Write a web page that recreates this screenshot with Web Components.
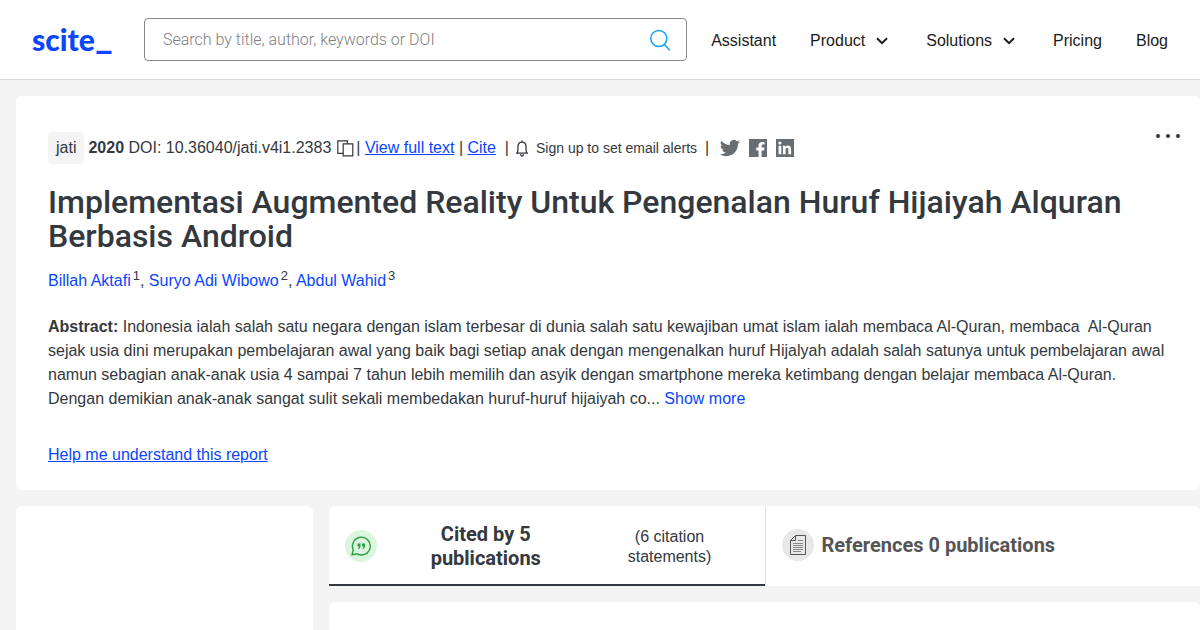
<!DOCTYPE html>
<html lang="id">
<head>
<meta charset="utf-8">
<meta name="viewport" content="width=device-width, initial-scale=1">
<title>Implementasi Augmented Reality Untuk Pengenalan Huruf Hijaiyah Alquran Berbasis Android - scite</title>
<style>
  body {
    margin: 0;
    background: #f4f4f4;
    color: #33393e;
    font: 16px/24px "Liberation Sans", Arial, sans-serif;
    overflow-x: hidden;
  }
</style>
</head>
<body>
<scite-header></scite-header>
<scite-page>
  <scite-paper slot="paper"></scite-paper>
  <scite-card slot="aside"></scite-card>
  <scite-tabs slot="results">
    <scite-tab kind="cited" active>Cited by 5 publications<span slot="note">(6 citation statements)</span></scite-tab>
    <scite-tab kind="refs">References 0 publications</scite-tab>
  </scite-tabs>
  <scite-card slot="results"></scite-card>
</scite-page>

<script>
const define = (name, html, setup) => {
  const template = document.createElement('template');
  template.innerHTML = html;
  customElements.define(name, class extends HTMLElement {
    constructor() {
      super();
      this.attachShadow({ mode: 'open' }).append(template.content.cloneNode(true));
    }
    connectedCallback() {
      if (setup) setup(this, this.shadowRoot);
    }
  });
};

define('scite-logo', `
  <style>
    :host { display: block; }
    a { color: #0a46ff; text-decoration: none; font: 900 30px/32px Lato, sans-serif; display: block; padding-bottom: 2px; }
    span { font-size: 38px; line-height: 0; vertical-align: 3px; }
  </style>
  <a href="/" aria-label="scite home">scite<span>_</span></a>`);

define('scite-search', `
  <style>
    :host { display: block; }
    form { display: flex; align-items: center; box-sizing: border-box; height: 43px; padding: 0 15px 0 18px; border: 1px solid #888; border-radius: 4px; background: #fff; }
    input { flex: 1; min-width: 0; border: 0; padding: 0; outline: 0; background: none; font: 300 16px/24px Roboto, sans-serif; color: #222; }
    input::placeholder { color: #808080; opacity: 1; }
    button { border: 0; padding: 0; background: none; display: flex; }
  </style>
  <form role="search">
    <input type="text" aria-label="Search" placeholder="Search by title, author, keywords or DOI">
    <button type="button" aria-label="Submit search">
      <svg width="21" height="22" viewBox="0 0 21 22" fill="none" stroke="#12a0f8" stroke-width="1.5"><circle cx="8.8" cy="9.5" r="8"/><path d="M14.2 15.5l5.6 5.8"/></svg>
    </button>
  </form>`);

define('scite-nav-item', `
  <style>
    :host { display: block; }
    a, button { display: flex; align-items: center; gap: 11px; border: 0; padding: 2px 0 0; background: none; font: inherit; line-height: 24px; color: #1b1b1b; text-decoration: none; white-space: nowrap; }
    button { margin-right: 4px; }
  </style>
  <a href="#"><slot></slot></a>`, (host, root) => {
  if (!host.hasAttribute('menu') || root.querySelector('button')) return;
  const button = document.createElement('button');
  button.type = 'button';
  button.setAttribute('aria-haspopup', 'true');
  button.innerHTML = '<slot></slot><svg width="12" height="8" viewBox="0 0 12 8" fill="none" stroke="#1b1b1b" stroke-width="2"><path d="M1 1.2l5 5 5-5"/></svg>';
  root.querySelector('a').replaceWith(button);
});

define('scite-header', `
  <style>
    :host { display: flex; align-items: center; box-sizing: border-box; height: 80px; padding: 0 32px; background: #fff; border-bottom: 1px solid #d8d8d8; }
    scite-logo { flex: none; width: 112px; }
    scite-search { flex: 1; min-width: 0; }
    nav { display: flex; gap: 34px; margin-left: 24px; }
  </style>
  <scite-logo></scite-logo>
  <scite-search></scite-search>
  <nav aria-label="Main">
    <scite-nav-item>Assistant</scite-nav-item>
    <scite-nav-item menu>Product</scite-nav-item>
    <scite-nav-item menu>Solutions</scite-nav-item>
    <scite-nav-item>Pricing</scite-nav-item>
    <scite-nav-item>Blog</scite-nav-item>
  </nav>`);

define('scite-page', `
  <style>
    :host { display: grid; grid-template-columns: 297px minmax(0, 1fr); gap: 16px; padding: 16px 0 0 16px; }
    .paper { grid-column: 1 / -1; }
    .aside { display: grid; }
    .results { display: grid; gap: 16px; align-content: start; }
  </style>
  <div class="paper"><slot name="paper"></slot></div>
  <div class="aside"><slot name="aside"></slot></div>
  <main class="results"><slot name="results"></slot></main>`);

define('scite-card', `
  <style>
    :host { display: block; min-height: 160px; background: #fff; border-radius: 6px; }
  </style>
  <slot></slot>`);

define('scite-meta', `
  <style>
    :host { display: flex; align-items: center; height: 32px; white-space: pre; }
    .journal { padding: 4px 8px; margin-right: 4px; border-radius: 4px; background: #f4f4f4; }
    a { color: #0a46ff; }
    button { border: 0; padding: 0; background: none; display: flex; align-items: center; font: inherit; color: inherit; }
    .copy { margin: 0 2px 0 6px; }
    .alerts { gap: 7px; margin: 0 8px 0 6px; font-size: 14px; }
    .social { display: flex; gap: 9px; margin-left: 11px; }
    .social a { display: flex; }
    .social svg { fill: #676d71; }
  </style>
  <span class="journal">jati</span><b>2020</b><span> DOI: 10.36040/jati.v4i1.2383</span>
  <button class="copy" type="button" aria-label="Copy DOI"><svg width="17" height="17" viewBox="0 0 17 17" fill="#fff" stroke="#33393e" stroke-width="1.2"><path d="M6 13.4H.8V.8h9.6V4"/><path d="M6.2 3.8h9.6v12H6.2z"/></svg></button>
  <span>| </span><a href="#">View full text</a><span> | </span><a href="#">Cite</a><span>  |</span>
  <button class="alerts" type="button"><svg width="14" height="17" viewBox="0 0 14 17" fill="none" stroke="#33393e" stroke-width="1.3"><path d="M1 13.2h12M2.2 13c.8-1.3.8-3.2.8-6.2C3 4 4.6 2.2 7 2.2S11 4 11 6.8c0 3 0 4.9.8 6.2M7 2.2V.4M5.6 14.2c0 2.4 2.8 2.4 2.8 0"/></svg>Sign up to set email alerts</button>
  <span>|</span>
  <span class="social">
    <a href="#" aria-label="Share on Twitter"><svg width="20" height="18" viewBox="0 2 24 20"><path d="M23.950 4.570a10 10 0 0 1-2.820.780 4.960 4.960 0 0 0 2.160-2.720c-.950.550-2 .950-3.130 1.180a4.920 4.920 0 0 0-8.380 4.480C7.690 8.090 4.070 6.130 1.640 3.160a4.920 4.920 0 0 0 1.520 6.570 4.900 4.900 0 0 1-2.230-.610v.060a4.920 4.920 0 0 0 3.950 4.830 5 5 0 0 1-2.210.080 4.940 4.940 0 0 0 4.600 3.420A9.870 9.870 0 0 1 0 19.540a14 14 0 0 0 7.550 2.210c9.050 0 14-7.500 14-13.980l-.020-.640a9.940 9.940 0 0 0 2.420-2.560z"/></svg></a>
    <a href="#" aria-label="Share on Facebook"><svg width="18" height="18" viewBox="0 0 18 18"><path fill-rule="evenodd" d="M0 0h18v18h-5.400v-6.600H15l.5-2.800h-2.900V7c0-.9.4-1.400 1.400-1.400h1.500V3h-2.200C10.900 3 9.600 4.400 9.600 6.600v2H7.300v2.800h2.300V18H0z"/></svg></a>
    <a href="#" aria-label="Share on LinkedIn"><svg width="18" height="18" viewBox="0 0 18 18"><path fill-rule="evenodd" d="M0 0h18v18H0zM2.600 6.700v8.500h2.700V6.700zM3.950 2.500a1.550 1.550 0 1 0 0 3.100 1.550 1.550 0 0 0 0-3.100zM6.900 6.700v8.500h2.700v-4.300c0-2.400 2.800-2.500 2.800 0v4.300h2.700V10c0-4.100-4.200-4.200-5.500-2.100V6.700z"/></svg></a>
  </span>`);

define('scite-author', `
  <style>
    :host { display: inline; }
    a { color: #0a46ff; text-decoration: none; }
    sup { margin-left: 2px; font-size: 13px; line-height: 0; vertical-align: 6px; }
  </style>
  <a href="#"><slot></slot></a><sup></sup>`, (host, root) => {
  root.querySelector('sup').textContent = host.getAttribute('affiliation');
});

define('scite-paper', `
  <style>
    :host { display: block; position: relative; padding: 36px 32px 23px; background: #fff; border-radius: 6px; }
    h1 { margin: 21px 0 16px; font: 500 32px/34px Roboto, sans-serif; }
    p { margin: 0; }
    .abstract { margin: 22px 0 32px; }
    a { color: #0a46ff; }
    .more { border: 0; padding: 0; background: none; font: inherit; color: #0a46ff; }
    .menu { position: absolute; top: 36px; right: 19px; display: flex; border: 0; padding: 0; background: none; }
  </style>
  <button class="menu" type="button" aria-label="More actions"><svg width="26" height="8" viewBox="0 0 26 8" fill="#33393e"><circle cx="3" cy="4" r="2"/><circle cx="13" cy="4" r="2"/><circle cx="23" cy="4" r="2"/></svg></button>
  <scite-meta></scite-meta>
  <h1>Implementasi Augmented Reality Untuk Pengenalan Huruf Hijaiyah Alquran Berbasis Android</h1>
  <p><scite-author affiliation="1">Billah Aktafi</scite-author>, <scite-author affiliation="2">Suryo Adi Wibowo</scite-author>, <scite-author affiliation="3">Abdul Wahid</scite-author></p>
  <p class="abstract"><b>Abstract:</b> Indonesia ialah salah satu negara dengan islam terbesar di dunia salah satu kewajiban umat islam ialah membaca Al-Quran, membaca&nbsp; Al-Quran sejak usia dini merupakan pembelajaran awal yang baik bagi setiap anak dengan mengenalkan huruf Hijalyah adalah salah satunya untuk pembelajaran awal namun sebagian anak-anak usia 4 sampai 7 tahun lebih memilih dan asyik dengan smartphone mereka ketimbang dengan belajar membaca Al-Quran. Dengan demikian anak-anak sangat sulit sekali membedakan huruf-huruf hijaiyah co... <button class="more" type="button">Show more</button></p>
  <p><a href="#">Help me understand this report</a></p>`);

define('scite-tabs', `
  <style>
    :host { display: grid; grid-template-columns: 1fr 1fr; height: 80px; background: #fff; border-radius: 6px 6px 0 0; overflow: hidden; }
  </style>
  <slot></slot>`);

define('scite-tab', `
  <style>
    :host { display: block; }
    button { display: flex; align-items: center; width: 100%; height: 100%; box-sizing: border-box; border: 0; padding: 0 16px 2px; background: none; color: #555; font: inherit; text-align: left; }
    :host([active]) button { padding-bottom: 0; box-shadow: inset 0 -2px #33393e; color: #33393e; text-align: center; }
    :host(:not([active])) button { border-left: 1px solid #ddd; }
    .title { margin-left: 8px; font: 700 20px/24px Roboto, sans-serif; }
    .note { display: none; line-height: 20px; }
    :host([active]) .title { flex: 1; padding: 0 44px 0 48px; margin: 0; }
    :host([active]) .note { display: block; flex: none; width: 158px; box-sizing: border-box; padding: 2px 32px 0; }
    .icon { flex: none; display: grid; place-items: center; width: 32px; height: 32px; border-radius: 50%; background: #e8e8e8; }
    :host([active]) .icon { background: #dcf5df; }
  </style>
  <button type="button"><span class="icon"></span><span class="title"><slot></slot></span><span class="note"><slot name="note"></slot></span></button>`, (host, root) => {
  root.querySelector('.icon').innerHTML = host.getAttribute('kind') === 'cited'
    ? '<svg width="20" height="20" viewBox="0 0 20 20" fill="none" stroke="#2e9e41" stroke-width="1.4"><path d="M2.3 13.8A8.9 8.9 0 1 1 6 17.8L1 18.8z"/><path fill="#2e9e41" stroke="none" d="M6.5 7.5h3v2.6c0 1.8-.9 2.8-2.4 3v-1.200c.6-.2.9-.6 1-1.400H6.500zM11 7.500h3v2.600c0 1.800-.9 2.800-2.400 3v-1.200c.6-.2.9-.6 1-1.400H11z"/></svg>'
    : '<svg width="16" height="20" viewBox="0 0 16 20" fill="none" stroke="#555"><path d="M5.5.5h10v19H.5v-14zM5.5.5v5h-5"/><path stroke="#888" d="M8 5.500h5M3 8.500h10M3 10.500h10M3 12.500h10M3 14.500h10M3 16.500h8"/></svg>';
});
</script>
</body>
</html>
